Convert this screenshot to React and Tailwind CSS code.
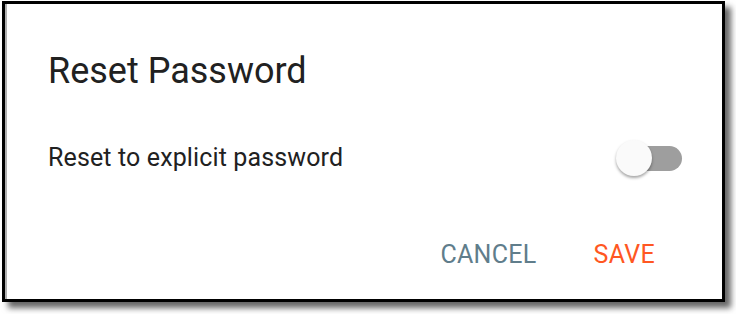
export default function App() {
  return (
    <div className="w-[736px] h-[314px] bg-white pt-[1px] pl-[2px]" style={{ fontFamily: "Roboto, 'Liberation Sans', sans-serif" }}>
      <div className="w-[723px] h-[301px] border-[3px] border-black bg-white shadow-[6px_6px_6px_rgba(0,0,0,0.6),inset_2px_0_0_#b0b0b0] flex flex-col pl-[43px] pr-[40px]">
        <h2 className="mt-[47px] text-[36px] leading-[40px] text-[#212121] font-normal">Reset Password</h2>
        <div className="mt-[49px] h-[36px] flex items-center justify-between">
          <span className="text-[25px] leading-[32px] tracking-[0.13px] text-[#212121]">Reset to explicit password</span>
          <button className="relative w-[66px] h-[36px] flex items-center">
            <span className="absolute right-0 w-[60px] h-[25px] rounded-full bg-[#9e9e9e]" />
            <span className="absolute left-0 w-[36px] h-[36px] rounded-full bg-[#fafafa] shadow-[0_2px_3px_rgba(0,0,0,0.35)]" />
          </button>
        </div>
        <div className="mt-[63px] flex justify-end pr-[27px] gap-[57px]">
          <button className="text-[25px] leading-[32px] tracking-[0.3px] text-[#607d8b] uppercase">Cancel</button>
          <button className="text-[25px] leading-[32px] tracking-[0.3px] text-[#ff5722] uppercase">Save</button>
        </div>
      </div>
    </div>
  );
}
